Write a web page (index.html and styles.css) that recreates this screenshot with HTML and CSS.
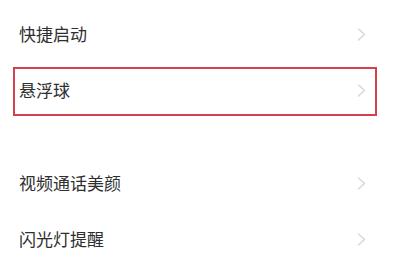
FILE: index.html
```html
<!DOCTYPE html>
<html lang="zh-CN">
<head>
    <meta charset="UTF-8">
    <meta name="viewport" content="width=device-width, initial-scale=1.0">
    <title>设置</title>
    <link rel="stylesheet" href="styles.css">
</head>
<body>
    <div class="settings">
        <div class="group">
            <div class="row">
                <span class="row-label">快捷启动</span>
                <svg class="chevron" width="9" height="13" viewBox="0 0 9 13"><polyline points="1.5,1 7.5,6.5 1.5,12" /></svg>
            </div>
            <div class="row highlighted">
                <span class="row-label">悬浮球</span>
                <svg class="chevron" width="9" height="13" viewBox="0 0 9 13"><polyline points="1.5,1 7.5,6.5 1.5,12" /></svg>
                <div class="highlight-box"></div>
            </div>
        </div>

        <div class="group">
            <div class="row">
                <span class="row-label">视频通话美颜</span>
                <svg class="chevron" width="9" height="13" viewBox="0 0 9 13"><polyline points="1.5,1 7.5,6.5 1.5,12" /></svg>
            </div>
            <div class="row">
                <span class="row-label">闪光灯提醒</span>
                <svg class="chevron" width="9" height="13" viewBox="0 0 9 13"><polyline points="1.5,1 7.5,6.5 1.5,12" /></svg>
            </div>
        </div>
    </div>
</body>
</html>
```

FILE: styles.css
```css
body {
    margin: 0;
    padding: 0;
    background-color: #fff;
    font-family: "Noto Sans CJK SC", "Noto Sans", sans-serif;
    color: #2e2e2e;
    overflow: hidden;
}

.settings {
    padding-top: 6px;
}

.group + .group {
    margin-top: 37px;
}

.row {
    position: relative;
    height: 56px;
    display: flex;
    align-items: center;
    justify-content: space-between;
    padding: 0 34px 0 19px;
}

.row-label {
    font-size: 17px;
    line-height: 56px;
}

.chevron {
    flex-shrink: 0;
}

.chevron polyline {
    fill: none;
    stroke: #d9d9d9;
    stroke-width: 1.6;
    stroke-linecap: round;
    stroke-linejoin: round;
}

/* red annotation frame drawn over the row */
.highlight-box {
    position: absolute;
    left: 13px;
    right: 23px;
    top: 5px;
    bottom: 2px;
    border: 2px solid #d4414c;
    box-sizing: border-box;
}
```
